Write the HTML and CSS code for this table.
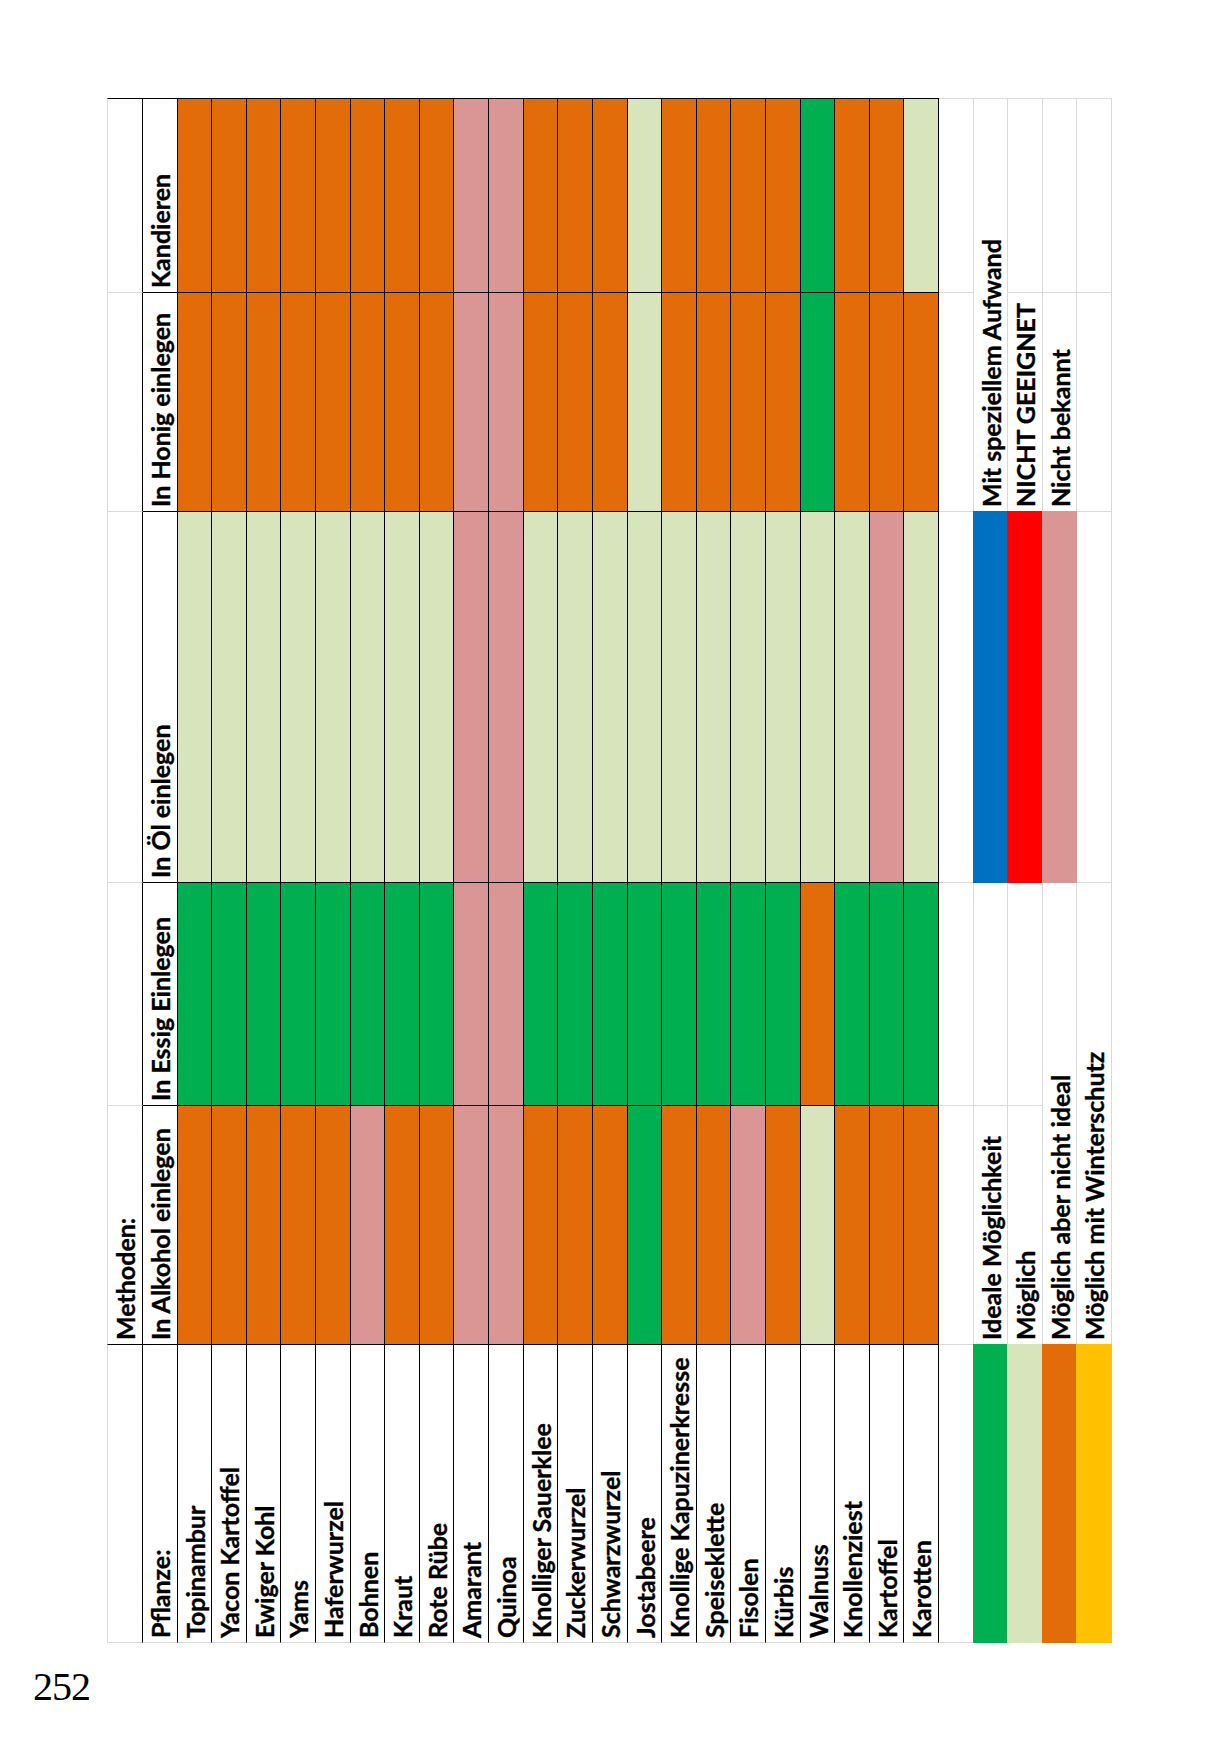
FILE: index.html
```html
<!DOCTYPE html>
<html lang="de">
<head>
<meta charset="utf-8">
<title>Methoden Tabelle</title>
<link rel="stylesheet" href="styles.css">
</head>
<body>
<div class="page">
  <div class="sheet">
    <!-- c0 -->
    <div class="m lg tk bg"></div>
    <div class="m lg bg"></div>
    <div class="m lg bg"></div>
    <div class="m lg bg"></div>
    <div class="m lg"><div class="vt">Methoden:</div></div>
    <div class="m lg bg"></div>
    <!-- c1 header -->
    <div class="m tk"><div class="vt">Kandieren</div></div>
    <div class="m"><div class="vt">In Honig einlegen</div></div>
    <div class="m"><div class="vt">In Öl einlegen</div></div>
    <div class="m"><div class="vt">In Essig Einlegen</div></div>
    <div class="m"><div class="vt">In Alkohol einlegen</div></div>
    <div class="m bg"><div class="vt">Pflanze:</div></div>
    <!-- data -->
    <div class="m tk o"></div><div class="m o"></div><div class="m l"></div><div class="m g"></div><div class="m o"></div><div class="m bg"><div class="vt">Topinambur</div></div>
    <div class="m tk o"></div><div class="m o"></div><div class="m l"></div><div class="m g"></div><div class="m o"></div><div class="m bg"><div class="vt">Yacon Kartoffel</div></div>
    <div class="m tk o"></div><div class="m o"></div><div class="m l"></div><div class="m g"></div><div class="m o"></div><div class="m bg"><div class="vt">Ewiger Kohl</div></div>
    <div class="m tk o"></div><div class="m o"></div><div class="m l"></div><div class="m g"></div><div class="m o"></div><div class="m bg"><div class="vt">Yams</div></div>
    <div class="m tk o"></div><div class="m o"></div><div class="m l"></div><div class="m g"></div><div class="m o"></div><div class="m bg"><div class="vt">Haferwurzel</div></div>
    <div class="m tk o"></div><div class="m o"></div><div class="m l"></div><div class="m g"></div><div class="m p"></div><div class="m bg"><div class="vt">Bohnen</div></div>
    <div class="m tk o"></div><div class="m o"></div><div class="m l"></div><div class="m g"></div><div class="m o"></div><div class="m bg"><div class="vt">Kraut</div></div>
    <div class="m tk o"></div><div class="m o"></div><div class="m l"></div><div class="m g"></div><div class="m o"></div><div class="m bg"><div class="vt">Rote Rübe</div></div>
    <div class="m tk p"></div><div class="m p"></div><div class="m p"></div><div class="m p"></div><div class="m p"></div><div class="m bg"><div class="vt">Amarant</div></div>
    <div class="m tk p"></div><div class="m p"></div><div class="m p"></div><div class="m p"></div><div class="m p"></div><div class="m bg"><div class="vt">Quinoa</div></div>
    <div class="m tk o"></div><div class="m o"></div><div class="m l"></div><div class="m g"></div><div class="m o"></div><div class="m bg"><div class="vt">Knolliger Sauerklee</div></div>
    <div class="m tk o"></div><div class="m o"></div><div class="m l"></div><div class="m g"></div><div class="m o"></div><div class="m bg"><div class="vt">Zuckerwurzel</div></div>
    <div class="m tk o"></div><div class="m o"></div><div class="m l"></div><div class="m g"></div><div class="m o"></div><div class="m bg"><div class="vt">Schwarzwurzel</div></div>
    <div class="m tk l"></div><div class="m l"></div><div class="m l"></div><div class="m g"></div><div class="m g"></div><div class="m bg"><div class="vt">Jostabeere</div></div>
    <div class="m tk o"></div><div class="m o"></div><div class="m l"></div><div class="m g"></div><div class="m o"></div><div class="m bg"><div class="vt">Knollige Kapuzinerkresse</div></div>
    <div class="m tk o"></div><div class="m o"></div><div class="m l"></div><div class="m g"></div><div class="m o"></div><div class="m bg"><div class="vt">Speiseklette</div></div>
    <div class="m tk o"></div><div class="m o"></div><div class="m l"></div><div class="m g"></div><div class="m p"></div><div class="m bg"><div class="vt">Fisolen</div></div>
    <div class="m tk o"></div><div class="m o"></div><div class="m l"></div><div class="m g"></div><div class="m o"></div><div class="m bg"><div class="vt">Kürbis</div></div>
    <div class="m tk g"></div><div class="m g"></div><div class="m l"></div><div class="m o"></div><div class="m l"></div><div class="m bg"><div class="vt">Walnuss</div></div>
    <div class="m tk o"></div><div class="m o"></div><div class="m l"></div><div class="m g"></div><div class="m o"></div><div class="m bg"><div class="vt">Knollenziest</div></div>
    <div class="m tk o"></div><div class="m o"></div><div class="m p"></div><div class="m g"></div><div class="m o"></div><div class="m bg"><div class="vt">Kartoffel</div></div>
    <div class="m tk l"></div><div class="m o"></div><div class="m l"></div><div class="m g"></div><div class="m o"></div><div class="m bg"><div class="vt">Karotten</div></div>
    <!-- c24 blank -->
    <div class="x tg"></div><div class="x"></div><div class="x"></div><div class="x"></div><div class="x"></div><div class="x"></div>
    <!-- c25 -->
    <div class="x tg span2"><div class="vt">Mit speziellem Aufwand</div></div>
    <div class="sw blue"></div>
    <div class="x"></div>
    <div class="x"><div class="vt">Ideale Möglichkeit</div></div>
    <div class="sw green"></div>
    <!-- c26 -->
    <div class="x tg"></div>
    <div class="x"><div class="vt">NICHT GEEIGNET</div></div>
    <div class="sw red"></div>
    <div class="x"></div>
    <div class="x"><div class="vt">Möglich</div></div>
    <div class="sw lgreen"></div>
    <!-- c27 -->
    <div class="x tg"></div>
    <div class="x"><div class="vt">Nicht bekannt</div></div>
    <div class="sw pink"></div>
    <div class="x span2"><div class="vt">Möglich aber nicht ideal</div></div>
    <div class="sw orange"></div>
    <!-- c28 -->
    <div class="x tg"></div>
    <div class="x"></div>
    <div class="x"></div>
    <div class="x span2"><div class="vt">Möglich mit Winterschutz</div></div>
    <div class="sw yellow"></div>
  </div>
  <div class="pnum">252</div>
</div>
</body>
</html>
```

FILE: styles.css
```css
html, body {
  margin: 0;
  padding: 0;
  background: #ffffff;
}

.page {
  width: 1216px;
  height: 1744px;
  padding: 98px 0 0 107px;
  box-sizing: border-box;
  display: flex;
  flex-direction: column;
  align-items: flex-start;
}

.sheet {
  display: grid;
  grid-auto-flow: column;
  grid-template-rows: 195px 219px 371px 223px 239px 298px;
  grid-template-columns: 36px repeat(28, 34.62px);
  font-family: "Lato", "Open Sans", sans-serif;
  font-weight: 700;
  font-size: 25px;
  color: #000;
}

.sheet > div {
  box-sizing: border-box;
  min-width: 0;
  min-height: 0;
  position: relative;
}

/* black bordered cells */
.m {
  border-right: 1px solid #000;
  border-bottom: 1px solid #000;
  background: #fff;
}

/* grey gridline cells */
.x {
  border-right: 1px solid #d9d9d9;
  border-bottom: 1px solid #d9d9d9;
  background: #fff;
}

.tk { border-top: 1px solid #000; }
.tg { border-top: 1px solid #d9d9d9; }
.lg { border-left: 1px solid #d9d9d9; }
.m.bg { border-bottom-color: #d9d9d9; }

.span2 { grid-row: span 2; }

/* fills */
.o { background: #e26b0a; }
.p { background: #da9694; }
.l { background: #d8e4bc; }
.g { background: #00b050; }

.sw {
  margin: -1px 0 0 -1px;
}
.blue { background: #0070c0; }
.red { background: #ff0000; }
.pink { background: #da9694; }
.green { background: #00b050; }
.lgreen { background: #d8e4bc; }
.orange { background: #e26b0a; }
.yellow { background: #ffc000; }

/* rotated text, reading bottom to top */
.vt {
  writing-mode: vertical-rl;
  transform: rotate(180deg);
  height: 100%;
  box-sizing: border-box;
  padding-top: 4px;
  line-height: 35px;
  white-space: nowrap;
  -webkit-text-stroke: 0.35px #000;
}

.pnum {
  margin: 24px 0 0 -74px;
  font-family: "Liberation Serif", "Times New Roman", serif;
  font-size: 40px;
  line-height: 40px;
  letter-spacing: -1px;
  color: #000;
}
```
